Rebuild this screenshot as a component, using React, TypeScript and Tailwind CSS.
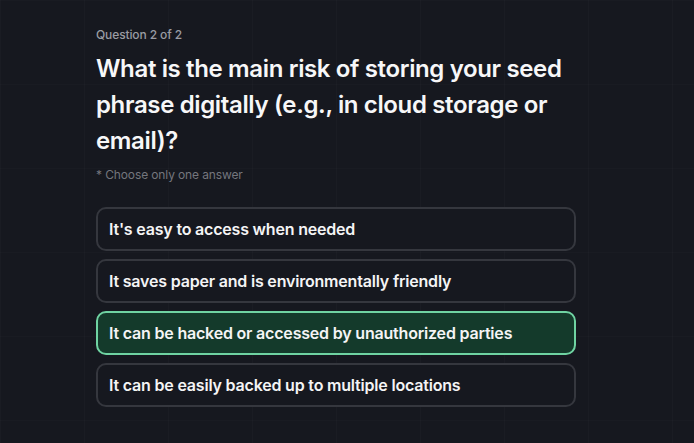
const options = [
  { id: 'a', label: "It's easy to access when needed" },
  { id: 'b', label: 'It saves paper and is environmentally friendly' },
  { id: 'c', label: 'It can be hacked or accessed by unauthorized parties' },
  { id: 'd', label: 'It can be easily backed up to multiple locations' },
];

export default function App() {
  const selected = 'c';

  return (
    <div
      className="min-h-[443px] w-full bg-[#16181f] bg-[linear-gradient(rgba(255,255,255,0.012)_1px,transparent_1px),linear-gradient(90deg,rgba(255,255,255,0.015)_1px,transparent_1px)] bg-[size:84px_84px] pt-[27px]"
      style={{ fontFamily: 'Inter, "Noto Sans", sans-serif' }}
    >
      <div className="ml-[96px] w-[480px]">
        <p className="text-xs leading-4 font-medium tracking-[-0.01em] text-[#9a9ca3]">Question 2 of 2</p>
        <h1 className="mt-2 text-2xl leading-9 font-semibold tracking-[-0.015em] text-[#f7f7f8]">
          What is the main risk of storing your seed phrase digitally (e.g., in cloud storage or email)?
        </h1>
        <p className="mt-2 text-xs leading-4 tracking-[-0.01em] text-[#74767d]">* Choose only one answer</p>

        <div className="mt-6 flex flex-col gap-2">
          {options.map((o) => {
            const active = o.id === selected;
            return (
              <button
                key={o.id}
                type="button"
                className={
                  'h-11 w-full rounded-[10px] border-2 px-[11px] text-left text-base font-semibold tracking-[-0.012em] text-[#f4f4f5] ' +
                  (active ? 'border-[#6fd3a2] bg-[#143a2b]' : 'border-[#35373e] bg-[#16181f]')
                }
              >
                {o.label}
              </button>
            );
          })}
        </div>
      </div>
    </div>
  );
}
